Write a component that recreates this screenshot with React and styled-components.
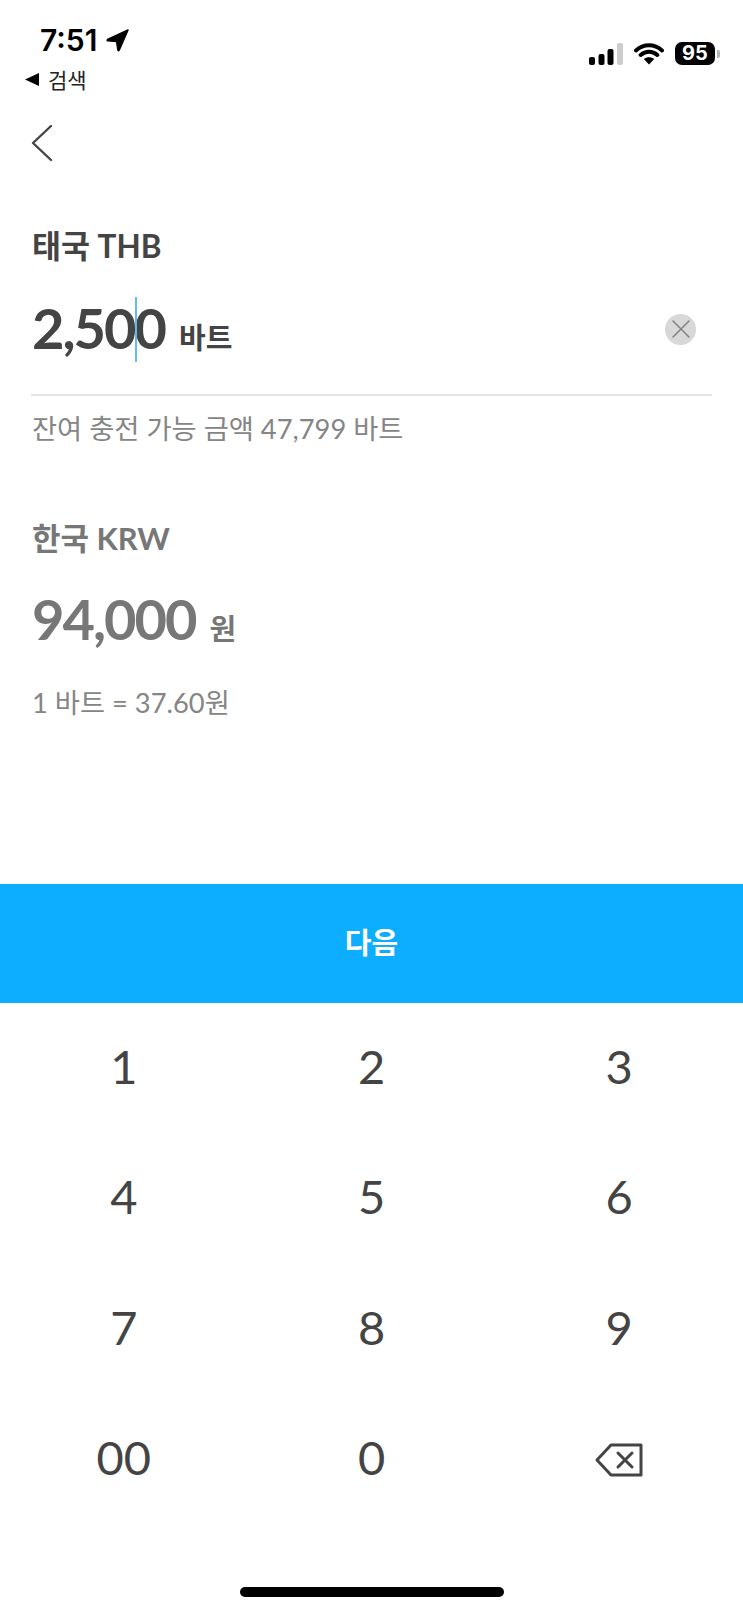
import styled, { createGlobalStyle } from "styled-components";

const GlobalStyle = createGlobalStyle`
  html, body {
    margin: 0;
    padding: 0;
    background: #fff;
  }
  body {
    font-family: Lato, "Noto Sans CJK KR", sans-serif;
  }
`;

const Page = styled.div`
  width: 743px;
  height: 1609px;
  display: flex;
  flex-direction: column;
  overflow: hidden;
`;

const StatusBar = styled.div`
  height: 64px;
  padding: 0 23px 0 40px;
  display: flex;
  justify-content: space-between;
  align-items: flex-end;
  box-sizing: border-box;
  flex-shrink: 0;
`;

const Time = styled.div`
  display: flex;
  align-items: center;
  gap: 9px;
  font-family: Inter, sans-serif;
  font-size: 30px;
  font-weight: 600;
  line-height: 30px;
  color: #000;
  margin-bottom: 9px;
`;

const StatusIcons = styled.div`
  display: flex;
  align-items: center;
  gap: 11px;
  margin-bottom: -1px;
`;

const BatteryBody = styled.div`
  display: flex;
  align-items: center;
  gap: 2px;
`;

const Battery = styled.div`
  width: 40px;
  height: 23px;
  border-radius: 7px;
  background: #000;
  color: #fff;
  font-family: Inter, sans-serif;
  font-size: 20px;
  font-weight: 700;
  line-height: 23px;
  text-align: center;
`;

const BatteryTip = styled.div`
  width: 3px;
  height: 8px;
  border-radius: 0 2px 2px 0;
  background: #b5b5b5;
`;

const BackLink = styled.div`
  height: 30px;
  padding-left: 25px;
  display: flex;
  align-items: center;
  gap: 9px;
  font-family: "Noto Sans CJK KR", sans-serif;
  font-size: 21px;
  color: #222;
  flex-shrink: 0;
`;

const Nav = styled.div`
  height: 132px;
  padding: 30px 0 0 31px;
  box-sizing: border-box;
  flex-shrink: 0;
`;

const Content = styled.div`
  height: 658px;
  padding: 0 31px;
  box-sizing: border-box;
  flex-shrink: 0;
`;

const Label = styled.div`
  font-size: ${(p) => (p.$muted ? 31 : 31.5)}px;
  line-height: 40px;
  font-weight: 700;
  padding-left: 1px;
  color: ${(p) => (p.$muted ? "#777" : "#444")};
  margin-top: ${(p) => p.$top || 0}px;
`;

const AmountRow = styled.div`
  display: flex;
  align-items: center;
  justify-content: space-between;
  height: 104px;
  padding-left: 1px;
  margin-top: ${(p) => p.$top || 0}px;
`;

const Amount = styled.div`
  display: flex;
  align-items: baseline;
  gap: 14px;
  color: ${(p) => (p.$muted ? "#777" : "#444")};
  font-weight: 700;
`;

const Digits = styled.span`
  font-size: 56px;
  line-height: 1;
  letter-spacing: -2px;
  position: relative;
`;

const Caret = styled.span`
  position: absolute;
  left: 103px;
  top: -3px;
  width: 2px;
  height: 65px;
  background: #63bbe9;
`;

const Unit = styled.span`
  font-family: "Noto Sans CJK KR", sans-serif;
  font-size: 29px;
  font-weight: 700;
`;

const ClearButton = styled.div`
  width: 31px;
  height: 31px;
  border-radius: 50%;
  background: #d8d8d8;
  margin: 2px 16px 0 0;
  display: flex;
  align-items: center;
  justify-content: center;
`;

const Divider = styled.div`
  height: 2px;
  background: #e4e4e4;
  margin-top: 14px;
`;

const Hint = styled.div`
  font-size: 27.3px;
  line-height: 34px;
  font-weight: 400;
  color: #858585;
  margin-top: ${(p) => p.$top || 0}px;
  padding-left: 1px;
`;

const NextButton = styled.div`
  height: 119px;
  padding-bottom: 6px;
  box-sizing: border-box;
  background: #0dadff;
  color: #fff;
  font-family: "Noto Sans CJK KR", sans-serif;
  font-size: 29px;
  font-weight: 700;
  display: flex;
  align-items: center;
  justify-content: center;
  flex-shrink: 0;
`;

const Keypad = styled.div`
  display: grid;
  grid-template-columns: repeat(3, 247.7px);
  grid-auto-rows: 130.5px;
  flex-shrink: 0;
`;

const Key = styled.div`
  display: flex;
  align-items: center;
  justify-content: center;
  padding-bottom: ${(p) => (p.$icon ? 0 : 5)}px;
  box-sizing: border-box;
  font-size: 47px;
  color: #444;
`;

const HomeBar = styled.div`
  width: 264px;
  height: 10px;
  border-radius: 5px;
  background: #000;
  margin: 62px auto 0;
`;

const keys = ["1", "2", "3", "4", "5", "6", "7", "8", "9", "00", "0"];

const App = () => (
  <Page>
    <GlobalStyle />
    <StatusBar>
      <Time>
        7:51
        <svg width="23" height="24" viewBox="0 0 24 24">
          <path
            d="M23 1.5 1.5 11.5c-.6.4-.4 1.2.3 1.3L11 13.5l1.4 9c.2.8 1 .9 1.4.2Z"
            fill="#000"
            stroke="#000"
            strokeWidth="1.5"
            strokeLinejoin="round"
          />
        </svg>
      </Time>
      <StatusIcons>
        <svg width="34" height="22" viewBox="0 0 34 22">
          <rect x="0" y="14" width="6" height="8" rx="2" fill="#000" />
          <rect x="9.5" y="11" width="6" height="11" rx="2" fill="#000" />
          <rect x="18.5" y="6" width="6" height="16" rx="2" fill="#000" />
          <rect x="28" y="0" width="6" height="22" rx="2" fill="#ccc" />
        </svg>
        <svg width="30" height="22" viewBox="0 0 30 22">
          <path
            d="M2 7.5C9.5.6 20.5.6 28 7.5M6.7 12c5-4.3 11.6-4.3 16.6 0"
            fill="none"
            stroke="#000"
            strokeWidth="4"
            strokeLinecap="round"
          />
          <path d="M15 21.5 9.8 16c3-2.4 7.4-2.4 10.4 0Z" fill="#000" />
        </svg>
        <BatteryBody>
          <Battery>95</Battery>
          <BatteryTip />
        </BatteryBody>
      </StatusIcons>
    </StatusBar>
    <BackLink>
      <svg width="14" height="13" viewBox="0 0 14 13">
        <path d="M0 6.5 14 0v13Z" fill="#000" />
      </svg>
      검색
    </BackLink>
    <Nav>
      <svg width="22" height="38" viewBox="0 0 22 38">
        <path
          d="M20 2 2 19l18 17"
          fill="none"
          stroke="#444"
          strokeWidth="2.4"
          strokeLinecap="round"
          strokeLinejoin="round"
        />
      </svg>
    </Nav>
    <Content>
      <Label>태국 THB</Label>
      <AmountRow $top={10}>
        <Amount>
          <Digits>
            2,500
            <Caret />
          </Digits>
          <Unit>바트</Unit>
        </Amount>
        <ClearButton>
          <svg width="20" height="20" viewBox="0 0 20 20">
            <path
              d="M2 2l16 16M18 2 2 18"
              stroke="#808080"
              strokeWidth="1.5"
              strokeLinecap="round"
            />
          </svg>
        </ClearButton>
      </AmountRow>
      <Divider />
      <Hint $top={16}>잔여 충전 가능 금액 47,799 바트</Hint>
      <Label $muted $top={72}>
        한국 KRW
      </Label>
      <AmountRow $top={9}>
        <Amount $muted>
          <Digits>94,000</Digits>
          <Unit>원</Unit>
        </Amount>
      </AmountRow>
      <Hint $top={15}>1 바트 = 37.60원</Hint>
    </Content>
    <NextButton>다음</NextButton>
    <Keypad>
      {keys.map((k) => (
        <Key key={k}>{k}</Key>
      ))}
      <Key $icon>
        <svg width="48" height="34" viewBox="0 0 48 34">
          <path
            d="M16 2h30v30H16L2 17Z"
            fill="none"
            stroke="#444"
            strokeWidth="3"
            strokeLinejoin="round"
          />
          <path
            d="M23 10l14 14M37 10 23 24"
            stroke="#444"
            strokeWidth="3"
            strokeLinecap="round"
          />
        </svg>
      </Key>
    </Keypad>
    <HomeBar />
  </Page>
);

export default App;
